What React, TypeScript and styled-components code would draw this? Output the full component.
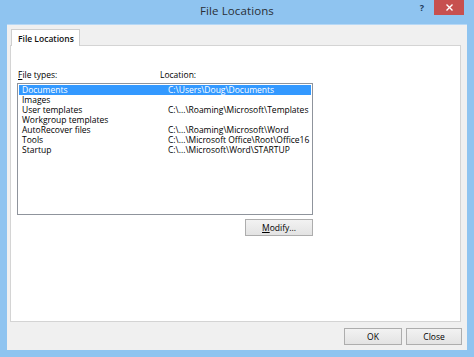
import React from "react";
import styled, { createGlobalStyle } from "styled-components";

const Global = createGlobalStyle`
  html, body { margin: 0; padding: 0; overflow: hidden; }
  body { font-family: "Open Sans", "Noto Sans", Arial, sans-serif; }
`;

const Window = styled.div`
  width: 474px;
  height: 357px;
  background: #8fc4f0;
  display: flex;
  flex-direction: column;
  box-sizing: border-box;
`;

const TitleBar = styled.div`
  height: 24px;
  display: grid;
  grid-template-columns: 1fr auto 1fr;
  align-items: start;
`;

const Title = styled.div`
  grid-column: 2;
  font-size: 11.5px;
  line-height: 22px;
  color: #2a2f36;
  letter-spacing: 0.1px;
`;

const Controls = styled.div`
  grid-column: 3;
  justify-self: end;
  display: flex;
  align-items: flex-start;
  margin-right: 10px;
`;

const HelpButton = styled.div`
  width: 20px;
  height: 15px;
  font-size: 9px;
  font-weight: 700;
  line-height: 15px;
  color: #1d3b5c;
  text-align: center;
  margin-right: 2px;
`;

const CloseButton = styled.div`
  width: 30px;
  height: 15px;
  background: #c7504f;
  display: flex;
  align-items: center;
  justify-content: center;
`;

const Client = styled.div`
  flex: 1;
  margin: 0 7px 7px 7px;
  background: #f0f0f0;
  border-top: 1px solid #b6d8f6;
  display: flex;
  flex-direction: column;
  padding: 4px 5px 5px 3px;
  min-height: 0;
`;

const TabStrip = styled.div`
  height: 17px;
  display: flex;
  padding-left: 1px;
  position: relative;
  z-index: 1;
`;

const Tab = styled.div`
  width: 69px;
  height: 17px;
  background: #fff;
  border: 1px solid #cfcfcf;
  border-bottom: none;
  font-size: 8.5px;
  font-weight: 600;
  color: #111;
  line-height: 18px;
  padding-left: 6px;
  box-sizing: border-box;
`;

const Panel = styled.div`
  flex: 1;
  margin-top: -1px;
  margin-right: 1px;
  background: #fff;
  border: 1px solid #d4d4d4;
  padding: 24px 0 0 6px;
  display: flex;
  flex-direction: column;
  align-items: flex-start;
  min-height: 0;
`;

const LabelRow = styled.div`
  width: 296px;
  display: grid;
  grid-template-columns: 142px 1fr;
  font-size: 8.5px;
  line-height: 10px;
  color: #000;
  padding-left: 1px;
  box-sizing: border-box;
  margin-bottom: 3px;
`;

const U = styled.span`
  text-decoration: underline;
  text-underline-offset: 1px;
`;

const List = styled.div`
  width: 296px;
  height: 132px;
  border: 1px solid #8f949c;
  box-sizing: border-box;
  padding: 1px;
  background: #fff;
`;

const Row = styled.div<{ $selected?: boolean }>`
  display: grid;
  grid-template-columns: 146px 1fr;
  height: 10px;
  line-height: 10px;
  font-size: 8.5px;
  padding-left: 3px;
  white-space: nowrap;
  background: ${(p) => (p.$selected ? "#3399ff" : "transparent")};
  color: ${(p) => (p.$selected ? "#fff" : "#000")};
`;

const ModifyRow = styled.div`
  width: 296px;
  display: flex;
  justify-content: flex-end;
  margin-top: 4px;
`;

const Button = styled.div<{ $w: number }>`
  width: ${(p) => p.$w}px;
  height: 17px;
  box-sizing: border-box;
  border: 1px solid #adadad;
  background: linear-gradient(#f2f2f2, #e3e3e3);
  font-size: 8.5px;
  line-height: 15px;
  color: #000;
  text-align: center;
`;

const ButtonRow = styled.div`
  display: flex;
  justify-content: flex-end;
  gap: 4px;
  margin-top: 6px;
`;

const rows: { name: string; path: string }[] = [
  { name: "Documents", path: "C:\\Users\\Doug\\Documents" },
  { name: "Images", path: "" },
  { name: "User templates", path: "C:\\...\\Roaming\\Microsoft\\Templates" },
  { name: "Workgroup templates", path: "" },
  { name: "AutoRecover files", path: "C:\\...\\Roaming\\Microsoft\\Word" },
  { name: "Tools", path: "C:\\...\\Microsoft Office\\Root\\Office16" },
  { name: "Startup", path: "C:\\...\\Microsoft\\Word\\STARTUP" },
];

export default function App() {
  return (
    <>
      <Global />
      <Window>
        <TitleBar>
          <Title>File Locations</Title>
          <Controls>
            <HelpButton>?</HelpButton>
            <CloseButton>
              <svg width="7" height="7" viewBox="0 0 7 7">
                <path d="M0.5 0.5 L6.5 6.5 M6.5 0.5 L0.5 6.5" stroke="#fff" strokeWidth="1.4" />
              </svg>
            </CloseButton>
          </Controls>
        </TitleBar>
        <Client>
          <TabStrip>
            <Tab>File Locations</Tab>
          </TabStrip>
          <Panel>
            <LabelRow>
              <span>
                <U>F</U>ile types:
              </span>
              <span>Location:</span>
            </LabelRow>
            <List>
              {rows.map((r, i) => (
                <Row key={r.name} $selected={i === 0}>
                  <span>{r.name}</span>
                  <span>{r.path}</span>
                </Row>
              ))}
            </List>
            <ModifyRow>
              <Button $w={68}>
                <U>M</U>odify...
              </Button>
            </ModifyRow>
          </Panel>
          <ButtonRow>
            <Button $w={58}>OK</Button>
            <Button $w={56}>Close</Button>
          </ButtonRow>
        </Client>
      </Window>
    </>
  );
}
